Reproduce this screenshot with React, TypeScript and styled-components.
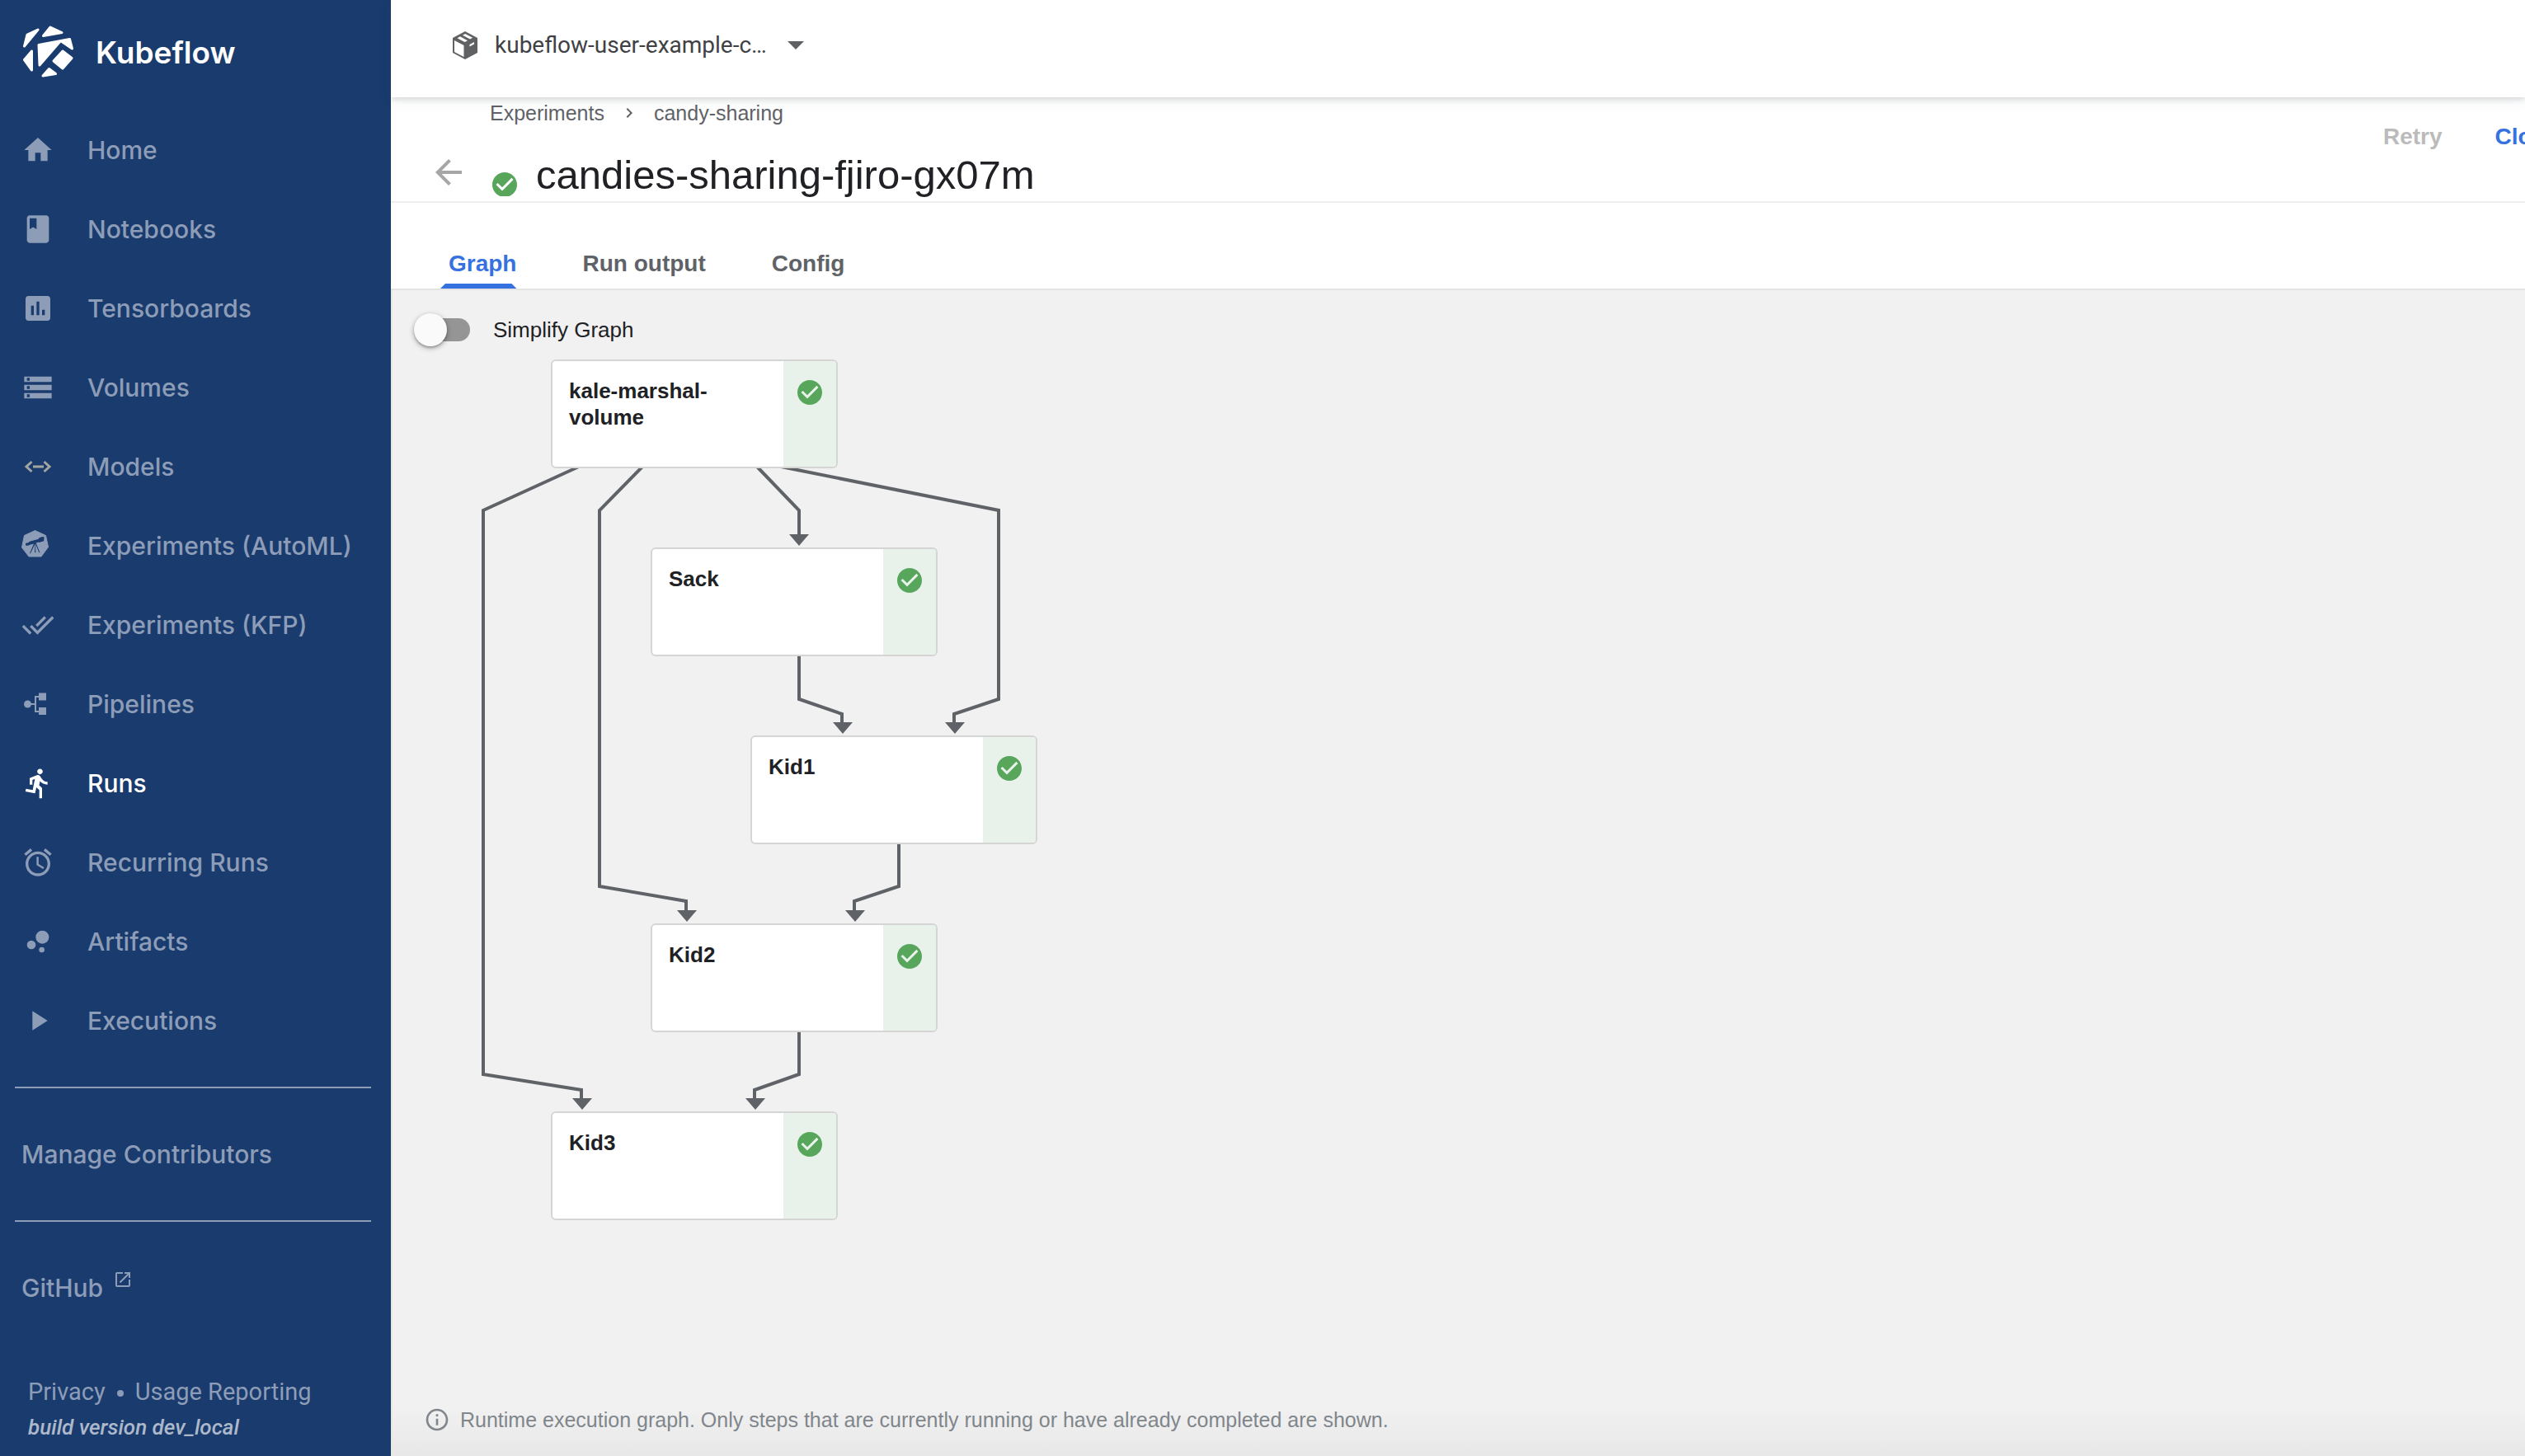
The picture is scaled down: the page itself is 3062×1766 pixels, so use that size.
import React from "react";
import styled, { createGlobalStyle, css } from "styled-components";

const GlobalStyle = createGlobalStyle`
  *, *::before, *::after { box-sizing: border-box; }
  html, body, #root { height: 100%; }
  body { margin: 0; overflow: hidden; font-family: "Liberation Sans", Arial, sans-serif; color: #202124; }
  a { color: inherit; text-decoration: none; }
  button, select, input { font: inherit; }
`;

const Shell = styled.div`
  display: grid;
  grid-template-columns: 474px minmax(0, 1fr);
  height: 100vh;
  background: #f1f1f1;
`;

/* ---------- sidebar ---------- */

const Sidebar = styled.aside`
  display: flex;
  flex-direction: column;
  background: #1a3b6e;
  color: #8d9db7;
  font-family: Inter, "Open Sans", sans-serif;
  font-size: 30px;
  font-weight: 500;
`;

const Brand = styled.a`
  display: flex;
  align-items: center;
  gap: 26px;
  height: 134px;
  padding: 0 28px 8px;
  color: #fff;
  font-size: 37px;
  font-weight: 600;
`;

const List = styled.ul`
  list-style: none;
  margin: 0;
  padding: 0;
`;

const NavLink = styled.a<{ $active?: boolean }>`
  display: flex;
  align-items: center;
  gap: 40px;
  height: 96px;
  padding: 0 26px;
  color: ${(p) => (p.$active ? "#fff" : "inherit")};
  white-space: nowrap;
`;

const Rule = styled.hr`
  width: auto;
  height: 2px;
  margin: 32px 24px 32px 18px;
  border: 0;
  background: #8d9db7;
`;

const PlainLink = styled.a`
  display: flex;
  align-items: center;
  gap: 12px;
  height: 96px;
  padding: 0 26px;

  svg { align-self: flex-start; margin-top: 26px; }
`;

const SideFooter = styled.footer`
  margin-top: auto;
  padding: 0 34px 14px;
  font-family: Roboto, sans-serif;
  font-weight: 400;
  font-size: 29px;
  line-height: 44px;
`;

const FooterLinks = styled.div`
  display: flex;
  align-items: center;
  gap: 14px;
`;

const Dot = styled.span`
  width: 8px;
  height: 8px;
  margin-top: 4px;
  border-radius: 50%;
  background: currentColor;
`;

const Build = styled.div`
  font-size: 26px;
  line-height: 42px;
  font-style: italic;
  font-weight: 500;
  color: #adb9cb;
`;

/* ---------- main column ---------- */

const Main = styled.div`
  display: flex;
  flex-direction: column;
  min-width: 0;
`;

const TopBar = styled.header`
  position: relative;
  z-index: 1;
  display: flex;
  align-items: center;
  gap: 20px;
  flex: none;
  height: 118px;
  padding: 0 74px 8px;
  background: #fff;
  color: #5f6163;
  box-shadow: 0 2px 8px rgba(60, 70, 85, 0.22), 0 4px 20px rgba(60, 70, 85, 0.05);
`;

const Picker = styled.label`
  display: grid;
  align-items: center;

  > * { grid-area: 1 / 1; }
  > svg { justify-self: end; pointer-events: none; }
`;

const NamespaceSelect = styled.select`
  appearance: none;
  width: 376px;
  padding: 0 44px 0 0;
  border: 0;
  background: none;
  color: #3f4144;
  font-family: Roboto, sans-serif;
  font-size: 28px;
  line-height: 36px;
  text-overflow: ellipsis;
`;

const PageHead = styled.section`
  display: flex;
  justify-content: space-between;
  flex: none;
  height: 128px;
  border-bottom: 2px solid #eeeeee;
  background: #fff;
`;

const HeadText = styled.div`
  display: grid;
  grid-template-columns: auto auto;
  grid-template-rows: 38px 88px;
  align-items: center;
  padding-left: 46px;
`;

const Crumbs = styled.nav`
  grid-column: 2;
  display: flex;
  align-items: center;
  gap: 18px;
  padding: 0 20px;
  color: #5f6368;
  font-size: 25px;
`;

const BackButton = styled.button`
  grid-column: 1;
  display: flex;
  width: 54px;
  margin-top: 18px;
  padding: 0;
  border: 0;
  background: none;
  color: #a6a6a6;
`;

const TitleRow = styled.div`
  display: flex;
  gap: 20px;
  height: 88px;
  padding-left: 20px;
`;

const TitleStatus = styled.span`
  height: 32px;
  margin-top: 50px;
  overflow: hidden;
`;

const Title = styled.h1`
  margin: 0;
  font-size: 49px;
  font-weight: 400;
  line-height: 56px;
  padding-top: 28px;
  white-space: nowrap;
`;

const Actions = styled.div`
  display: flex;
  align-items: flex-start;
  gap: 64px;
  width: 172px;
  padding-top: 30px;
  white-space: nowrap;
  overflow: hidden;
`;

const TextButton = styled.button`
  flex: none;
  padding: 0;
  border: 0;
  background: none;
  color: #3572e0;
  font-size: 28px;
  font-weight: 700;
  line-height: 36px;

  &:disabled { color: #bbbbbb; }
`;

const Tabs = styled.div`
  display: flex;
  align-items: flex-end;
  gap: 70px;
  flex: none;
  height: 106px;
  padding-left: 60px;
  border-bottom: 2px solid #e4e4e4;
  background: #fff;
`;

const Tab = styled.button<{ $active?: boolean }>`
  display: flex;
  flex-direction: column;
  padding: 0;
  border: 0;
  background: none;
  color: #5f6368;
  font-size: 28px;
  font-weight: 700;
  line-height: 36px;

  &::after {
    content: "";
    height: 6px;
    margin-top: 6px;
  }

  ${(p) =>
    p.$active &&
    css`
      color: #3572e0;
      &::after {
        background: #3572e0;
        clip-path: polygon(6px 0, calc(100% - 6px) 0, 100% 100%, 0 100%);
      }
    `}

  span { padding-left: 10px; }
`;

const Canvas = styled.main`
  position: relative;
  flex: 1;
  min-height: 0;
  border-left: 2px solid #e6e6e6;
  background: linear-gradient(to bottom, rgba(0, 0, 0, 0) calc(100% - 60px), rgba(0, 0, 0, 0.04)) #f1f1f1;
`;

const SwitchLabel = styled.label`
  display: flex;
  align-items: center;
  gap: 28px;
  height: 96px;
  padding-left: 38px;
  font-size: 26px;
`;

const Switch = styled.input`
  appearance: none;
  display: flex;
  align-items: center;
  width: 56px;
  height: 28px;
  margin: 0;
  border-radius: 14px;
  background: #959595;

  &::before {
    content: "";
    flex: none;
    width: 40px;
    height: 40px;
    margin-left: -12px;
    border-radius: 50%;
    background: #fafafa;
    box-shadow: 0 2px 6px rgba(0, 0, 0, 0.35), 0 2px 2px rgba(0, 0, 0, 0.15);
  }
  &:checked::before { margin-left: 28px; }
`;

const Graph = styled.div`
  position: absolute;
  inset: 0;
  pointer-events: none;
`;

const Edges = styled.svg`
  position: absolute;
  inset: 0;
  width: 100%;
  height: 100%;
`;

const Node = styled.div<{ $x: number; $y: number }>`
  position: absolute;
  left: ${(p) => p.$x}px;
  top: ${(p) => p.$y}px;
  display: flex;
  width: 348px;
  height: 132px;
  border: 2px solid #d5d5d5;
  border-radius: 6px;
  background: #fff;
  overflow: hidden;
  pointer-events: auto;
`;

const NodeName = styled.div`
  flex: 1;
  padding: 20px;
  font-size: 26px;
  font-weight: 700;
  line-height: 32px;
`;

const NodeStatus = styled.div`
  display: flex;
  justify-content: center;
  width: 64px;
  padding-top: 20px;
  background: #e8f2ea;
`;

const Hint = styled.p`
  position: absolute;
  left: 38px;
  bottom: 26px;
  display: flex;
  align-items: center;
  gap: 12px;
  margin: 0;
  color: #80868b;
  font-size: 25px;
  line-height: 36px;
`;

/* ---------- icons ---------- */

const Svg = styled.svg`
  display: block;
  flex: none;
`;

const Icon = ({ d, size = 40, fill = "currentColor" }: { d: string; size?: number; fill?: string }) => (
  <Svg width={size} height={size} viewBox="0 0 24 24" fill={fill} fillRule="evenodd" aria-hidden="true">
    <path d={d} />
  </Svg>
);

const paths = {
  home: "M10 20v-6h4v6h5v-8h3L12 3 2 12h3v8z",
  notebook:
    "M18 2H6c-1.1 0-2 .9-2 2v16c0 1.1.9 2 2 2h12c1.1 0 2-.9 2-2V4c0-1.1-.9-2-2-2zM6 4h5v8l-2.5-1.5L6 12V4z",
  chart:
    "M19 3H5c-1.1 0-2 .9-2 2v14c0 1.1.9 2 2 2h14c1.1 0 2-.9 2-2V5c0-1.1-.9-2-2-2zM9 17H7v-7h2v7zm4 0h-2V7h2v10zm4 0h-2v-4h2v4z",
  storage:
    "M2 20h20v-4H2v4zm2-3h2v2H4v-2zM2 4v4h20V4H2zm4 3H4V5h2v2zm-4 7h20v-4H2v4zm2-3h2v2H4v-2z",
  doneAll:
    "M18 7l-1.41-1.41-6.34 6.34 1.41 1.41L18 7zm4.24-1.41L11.66 16.17 7.48 12l-1.41 1.41L11.66 19l12-12-1.42-1.41zM.41 13.41L6 19l1.41-1.41L1.83 12 .41 13.41z",
  run: "M13.49 5.48c1.1 0 2-.9 2-2s-.9-2-2-2-2 .9-2 2 .9 2 2 2zm-3.6 13.9l1-4.4 2.1 2v6h2v-7.5l-2.1-2 .6-3c1.3 1.5 3.3 2.5 5.5 2.5v-2c-1.9 0-3.5-1-4.3-2.4l-1-1.6c-.4-.6-1-1-1.7-1-.3 0-.5.1-.8.1l-5.2 2.2v4.7h2v-3.4l1.8-.7-1.6 8.1-4.9-1-.4 2 7 1.4z",
  alarm:
    "M22 5.72l-4.6-3.86-1.29 1.53 4.6 3.86L22 5.72zM7.88 3.39L6.6 1.86 2 5.71l1.29 1.53 4.59-3.85zM12.5 8H11v6l4.75 2.85.75-1.23-4-2.37V8zM12 4c-4.97 0-9 4.03-9 9s4.02 9 9 9c4.97 0 9-4.03 9-9s-4.03-9-9-9zm0 16c-3.87 0-7-3.13-7-7s3.13-7 7-7 7 3.13 7 7-3.13 7-7 7z",
  play: "M8 5v14l11-7z",
  external:
    "M19 19H5V5h7V3H5c-1.11 0-2 .9-2 2v14c0 1.1.89 2 2 2h14c1.1 0 2-.9 2-2v-7h-2v7zM14 3v2h3.59l-9.83 9.83 1.41 1.41L19 6.41V10h2V3h-7z",
  back: "M20 11H7.83l5.59-5.59L12 4l-8 8 8 8 1.41-1.41L7.83 13H20v-2z",
  chevron: "M10 6L8.59 7.41 13.17 12l-4.58 4.59L10 18l6-6z",
  info: "M11 17h2v-6h-2v6zm1-15C6.48 2 2 6.48 2 12s4.48 10 10 10 10-4.48 10-10S17.52 2 12 2zm0 18c-4.41 0-8-3.59-8-8s3.59-8 8-8 8 3.59 8 8-3.59 8-8 8zM11 9h2V7h-2v2z",
  success:
    "M12 2C6.48 2 2 6.48 2 12s4.48 10 10 10 10-4.48 10-10S17.52 2 12 2zm-2 15l-5-5 1.41-1.41L10 14.17l7.59-7.59L19 8l-9 9z",
};

const BubbleIcon = () => (
  <Svg width="40" height="40" viewBox="0 0 24 24" fill="currentColor" aria-hidden="true">
    <circle cx="7.2" cy="14.4" r="3.2" />
    <circle cx="14.8" cy="18" r="2" />
    <circle cx="15.2" cy="8.8" r="4.8" />
  </Svg>
);

const ModelsIcon = () => (
  <Svg width="40" height="40" viewBox="0 0 40 40" fill="none" stroke="#a3a59f" strokeWidth="3" aria-hidden="true">
    <path d="M12.5 14l-6.5 6 6.5 6M27.5 14l6.5 6-6.5 6M14 20h13" />
  </Svg>
);

const TelescopeIcon = () => (
  <Svg width="40" height="40" viewBox="0 0 40 40" aria-hidden="true">
    <path
      d="M16.5 1.5L29.5 7.5 32.5 21.5 24 33H9L.5 22 3.500 7.500z"
      fill="currentColor"
      stroke="currentColor"
      strokeLinejoin="round"
    />
    <path
      d="M5 17l4-1 .3-1 11.5-3.2.2-1.3 4.5-1.4 2 .2-.3 5-5.8 1.7-.8-.6-3 1 4.8 11.9h-1l-4.6-10.500.5 10.500h-1.200l.3-10.500L11 29.300h-1l5-11.800-5 1.300-.8.6L5.300 20z"
      fill="#1a3b6e"
    />
  </Svg>
);

const PipelineIcon = () => (
  <Svg width="40" height="40" viewBox="0 0 40 40" aria-hidden="true">
    <circle cx="7.500" cy="20" r="4.500" fill="currentColor" />
    <path d="M10 20h7M23 11h-6v18h6" fill="none" stroke="currentColor" strokeWidth="2" />
    <path d="M21 6.500h9v9h-9zM21 24h9v9h-9z" fill="currentColor" />
  </Svg>
);

const Logo = () => (
  <Svg width="62" height="64" viewBox="0 0 62 64" fill="#fff" stroke="#fff" strokeWidth="3" strokeLinejoin="round" aria-hidden="true">
    <path d="M1.500 25L5 11 18 5z" />
    <path d="M24.500 12.500L33 2 47 8.500z" />
    <path d="M19 23.500L56.500 16.500 59.500 28 45.500 18.500 20 48z" />
    <path d="M1.500 41.500L10.500 31V54z" />
    <path d="M48 31L59 39.500 48 52 37 43z" />
    <path d="M24 61L31.500 52.500 39.500 58.500z" />
  </Svg>
);

const PackageIcon = () => (
  <Svg width="32" height="36" viewBox="0 0 32 36" aria-hidden="true">
    <path d="M16 1L31 9v18L16 35 1 27V9z" fill="currentColor" />
    <path d="M3 12l11.500 6v14L3 26z" fill="#fff" />
    <path d="M6.500 9.200l3.500-1.900 9 4.900-3.500 1.900zM13 5.700l3.200-1.700 9 4.800-3.200 1.800z" fill="#fff" />
    <path d="M21.500 17l5.500-3v2.400l-5.500 3z" fill="#fff" />
  </Svg>
);

const CaretIcon = () => (
  <Svg width="22" height="12" viewBox="0 0 22 12" fill="currentColor" aria-hidden="true">
    <path d="M1 1h20L11 11z" />
  </Svg>
);

/* ---------- data ---------- */

const navItems: { label: string; icon: React.ReactNode; active?: boolean }[] = [
  { label: "Home", icon: <Icon d={paths.home} /> },
  { label: "Notebooks", icon: <Icon d={paths.notebook} /> },
  { label: "Tensorboards", icon: <Icon d={paths.chart} /> },
  { label: "Volumes", icon: <Icon d={paths.storage} /> },
  { label: "Models", icon: <ModelsIcon /> },
  { label: "Experiments (AutoML)", icon: <TelescopeIcon /> },
  { label: "Experiments (KFP)", icon: <Icon d={paths.doneAll} /> },
  { label: "Pipelines", icon: <PipelineIcon /> },
  { label: "Runs", icon: <Icon d={paths.run} />, active: true },
  { label: "Recurring Runs", icon: <Icon d={paths.alarm} /> },
  { label: "Artifacts", icon: <BubbleIcon /> },
  { label: "Executions", icon: <Icon d={paths.play} /> },
];

const nodes = [
  { name: "kale-marshal-volume", x: 192, y: 84 },
  { name: "Sack", x: 313, y: 312 },
  { name: "Kid1", x: 434, y: 540 },
  { name: "Kid2", x: 313, y: 768 },
  { name: "Kid3", x: 192, y: 996 },
];

const edges = [
  "366,150 110,267 110,951 229,970 229,982",
  "366,150 251,267 251,723 356,741 356,754",
  "442,214 493,267 493,298",
  "466,213 735,267 735,496 681,514 681,526",
  "493,378 493,496 545,514 545,526",
  "614,606 614,723 560,741 560,754",
  "493,834 493,951 439,970 439,982",
];

const arrowHeads = [
  [230, 980],
  [357, 752],
  [493, 296],
  [682, 524],
  [546, 524],
  [561, 752],
  [440, 980],
];

const tabs = ["Graph", "Run output", "Config"];

export default function App() {
  return (
    <>
      <GlobalStyle />
      <Shell>
        <Sidebar>
          <Brand href="#">
            <Logo />
            Kubeflow
          </Brand>
          <nav>
            <List>
              {navItems.map((item) => (
                <li key={item.label}>
                  <NavLink href="#" $active={item.active} aria-current={item.active ? "page" : undefined}>
                    {item.icon}
                    {item.label}
                  </NavLink>
                </li>
              ))}
            </List>
            <Rule />
            <PlainLink href="#">Manage Contributors</PlainLink>
            <Rule />
            <PlainLink href="#">
              GitHub
              <Icon d={paths.external} size={24} />
            </PlainLink>
          </nav>
          <SideFooter>
            <FooterLinks>
              <a href="#">Privacy</a>
              <Dot />
              <a href="#">Usage Reporting</a>
            </FooterLinks>
            <Build>build version dev_local</Build>
          </SideFooter>
        </Sidebar>

        <Main>
          <TopBar>
            <PackageIcon />
            <Picker>
              <NamespaceSelect aria-label="Namespace">
                <option>kubeflow-user-example-c...</option>
              </NamespaceSelect>
              <CaretIcon />
            </Picker>
          </TopBar>

          <PageHead>
            <HeadText>
              <Crumbs aria-label="Breadcrumb">
                <a href="#">Experiments</a>
                <Icon d={paths.chevron} size={24} />
                <a href="#">candy-sharing</a>
              </Crumbs>
              <BackButton aria-label="Back">
                <Icon d={paths.back} size={48} />
              </BackButton>
              <TitleRow>
                <TitleStatus>
                  <Icon d={paths.success} size={36} fill="#58a65c" />
                </TitleStatus>
                <Title>candies-sharing-fjiro-gx07m</Title>
              </TitleRow>
            </HeadText>
            <Actions>
              <TextButton disabled>Retry</TextButton>
              <TextButton>Clone run</TextButton>
            </Actions>
          </PageHead>

          <Tabs role="tablist">
            {tabs.map((label, i) => (
              <Tab key={label} role="tab" aria-selected={i === 0} $active={i === 0}>
                <span>{label}</span>
              </Tab>
            ))}
          </Tabs>

          <Canvas>
            <Graph>
              <Edges fill="none" stroke="#5f6368" strokeWidth="4">
                {edges.map((points) => (
                  <polyline key={points} points={points} />
                ))}
                {arrowHeads.map(([x, y]) => (
                  <path key={`${x}-${y}`} d={`M${x - 12} ${y}h24l-12 14z`} fill="#5f6368" stroke="none" />
                ))}
              </Edges>
              {nodes.map((node) => (
                <Node key={node.name} $x={node.x} $y={node.y}>
                  <NodeName>{node.name}</NodeName>
                  <NodeStatus>
                    <Icon d={paths.success} size={36} fill="#58a65c" />
                  </NodeStatus>
                </Node>
              ))}
            </Graph>
            <SwitchLabel>
              <Switch type="checkbox" role="switch" />
              Simplify Graph
            </SwitchLabel>
            <Hint>
              <Icon d={paths.info} size={32} />
              Runtime execution graph. Only steps that are currently running or have already completed are shown.
            </Hint>
          </Canvas>
        </Main>
      </Shell>
    </>
  );
}
